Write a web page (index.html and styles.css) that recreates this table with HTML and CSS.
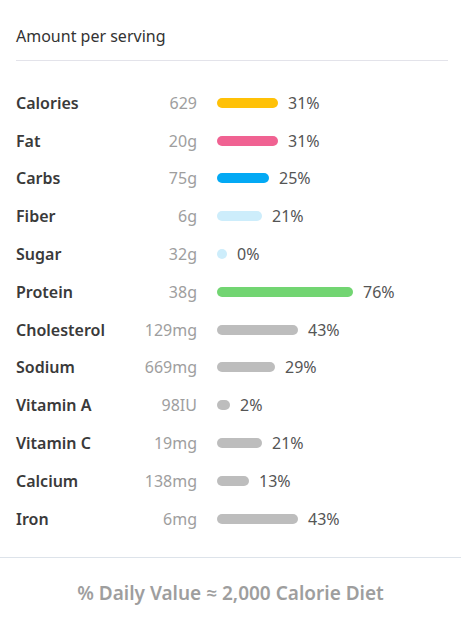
FILE: index.html
```html
<!DOCTYPE html>
<html lang="en">
<head>
  <meta charset="UTF-8" />
  <meta name="viewport" content="width=device-width, initial-scale=1.0"/>
  <title>Nutrition Facts</title>
  <link rel="stylesheet" href="styles.css">
</head>
<body>
  <div class="card">
    <div class="card-header">Amount per serving</div>

    <div class="nutrients">
      <div class="row">
        <span class="name">Calories</span>
        <span class="amount">629</span>
        <span class="bar yellow" style="width: 61px"></span>
        <span class="pct">31%</span>
      </div>
      <div class="row">
        <span class="name">Fat</span>
        <span class="amount">20g</span>
        <span class="bar pink" style="width: 61px"></span>
        <span class="pct">31%</span>
      </div>
      <div class="row">
        <span class="name">Carbs</span>
        <span class="amount">75g</span>
        <span class="bar blue" style="width: 52px"></span>
        <span class="pct">25%</span>
      </div>
      <div class="row">
        <span class="name">Fiber</span>
        <span class="amount">6g</span>
        <span class="bar light" style="width: 45px"></span>
        <span class="pct">21%</span>
      </div>
      <div class="row">
        <span class="name">Sugar</span>
        <span class="amount">32g</span>
        <span class="bar light" style="width: 10px"></span>
        <span class="pct">0%</span>
      </div>
      <div class="row">
        <span class="name">Protein</span>
        <span class="amount">38g</span>
        <span class="bar green" style="width: 136px"></span>
        <span class="pct">76%</span>
      </div>
      <div class="row">
        <span class="name">Cholesterol</span>
        <span class="amount">129mg</span>
        <span class="bar grey" style="width: 81px"></span>
        <span class="pct">43%</span>
      </div>
      <div class="row">
        <span class="name">Sodium</span>
        <span class="amount">669mg</span>
        <span class="bar grey" style="width: 58px"></span>
        <span class="pct">29%</span>
      </div>
      <div class="row">
        <span class="name">Vitamin A</span>
        <span class="amount">98IU</span>
        <span class="bar grey" style="width: 13px"></span>
        <span class="pct">2%</span>
      </div>
      <div class="row">
        <span class="name">Vitamin C</span>
        <span class="amount">19mg</span>
        <span class="bar grey" style="width: 45px"></span>
        <span class="pct">21%</span>
      </div>
      <div class="row">
        <span class="name">Calcium</span>
        <span class="amount">138mg</span>
        <span class="bar grey" style="width: 32px"></span>
        <span class="pct">13%</span>
      </div>
      <div class="row">
        <span class="name">Iron</span>
        <span class="amount">6mg</span>
        <span class="bar grey" style="width: 81px"></span>
        <span class="pct">43%</span>
      </div>
    </div>

    <div class="card-footer">% Daily Value &asymp; 2,000 Calorie Diet</div>
  </div>
</body>
</html>
```

FILE: styles.css
```css
body {
  margin: 0;
  padding: 0;
  background-color: #ffffff;
  color: #3a3a3a;
  font-family: "Noto Sans", "Open Sans", Arial, sans-serif;
}
.card {
  width: 461px;
}
.card-header {
  margin: 0 13px 0 16px;
  padding: 24px 0 12px;
  font-size: 16px;
  line-height: 24px;
  color: #333;
  border-bottom: 1px solid #e3e3ea;
}
.nutrients {
  padding: 23px 16px 19px;
}
.row {
  display: flex;
  align-items: center;
  height: 37.8px;
  font-size: 16px;
}
.row .name {
  width: 110px;
  font-weight: 600;
  color: #3a3a3a;
}
.row .amount {
  width: 71px;
  text-align: right;
  color: #9e9e9e;
  margin-right: 20px;
}
.bar {
  height: 10px;
  border-radius: 5px;
  margin-right: 10px;
}
.bar.yellow { background-color: #ffc107; }
.bar.pink { background-color: #f06292; }
.bar.blue { background-color: #03a9f4; }
.bar.light { background-color: #cdedfb; }
.bar.green { background-color: #72d572; }
.bar.grey { background-color: #bdbdbd; }
.row .pct {
  color: #555;
}
.card-footer {
  border-top: 1px solid #dde3ea;
  padding: 22px 0;
  text-align: center;
  font-size: 19px;
  line-height: 26px;
  font-weight: 600;
  color: #9e9e9e;
}
```
